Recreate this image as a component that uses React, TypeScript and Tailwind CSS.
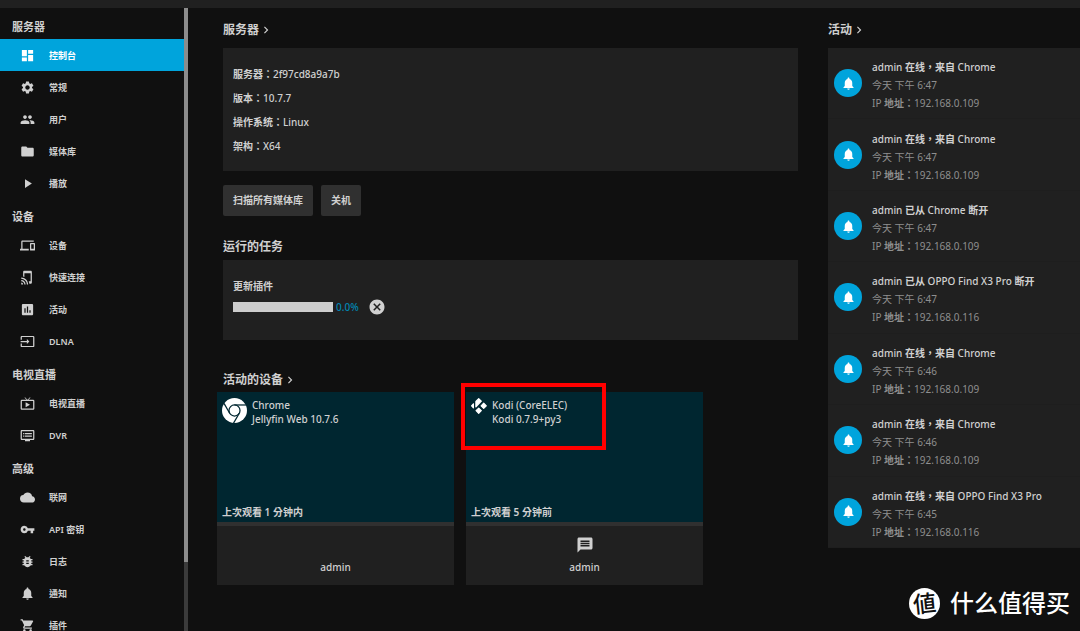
import type { IconType } from "react-icons";
import {
  MdAssessment,
  MdBugReport,
  MdCancel,
  MdChevronRight,
  MdCloud,
  MdDashboard,
  MdDevices,
  MdDvr,
  MdFolder,
  MdInput,
  MdLiveTv,
  MdMessage,
  MdNotifications,
  MdPeople,
  MdPlayArrow,
  MdSettings,
  MdShoppingCart,
  MdTapAndPlay,
  MdVpnKey,
} from "react-icons/md";

type NavItem = { label: string; icon: IconType; active?: boolean };
type NavGroup = { title: string; items: NavItem[] };

const navGroups: NavGroup[] = [
  {
    title: "服务器",
    items: [
      { label: "控制台", icon: MdDashboard, active: true },
      { label: "常规", icon: MdSettings },
      { label: "用户", icon: MdPeople },
      { label: "媒体库", icon: MdFolder },
      { label: "播放", icon: MdPlayArrow },
    ],
  },
  {
    title: "设备",
    items: [
      { label: "设备", icon: MdDevices },
      { label: "快速连接", icon: MdTapAndPlay },
      { label: "活动", icon: MdAssessment },
      { label: "DLNA", icon: MdInput },
    ],
  },
  {
    title: "电视直播",
    items: [
      { label: "电视直播", icon: MdLiveTv },
      { label: "DVR", icon: MdDvr },
    ],
  },
  {
    title: "高级",
    items: [
      { label: "联网", icon: MdCloud },
      { label: "API 密钥", icon: MdVpnKey },
      { label: "日志", icon: MdBugReport },
      { label: "通知", icon: MdNotifications },
      { label: "插件", icon: MdShoppingCart },
    ],
  },
];

const serverInfo = [
  { label: "服务器：", value: "2f97cd8a9a7b" },
  { label: "版本：", value: "10.7.7" },
  { label: "操作系统：", value: "Linux" },
  { label: "架构：", value: "X64" },
];

type Activity = {
  online: boolean;
  client: string;
  time: string;
  ip: string;
};

const activities: Activity[] = [
  { online: true, client: "Chrome", time: "6:47", ip: "192.168.0.109" },
  { online: true, client: "Chrome", time: "6:47", ip: "192.168.0.109" },
  { online: false, client: "Chrome", time: "6:47", ip: "192.168.0.109" },
  { online: false, client: "OPPO Find X3 Pro", time: "6:47", ip: "192.168.0.116" },
  { online: true, client: "Chrome", time: "6:46", ip: "192.168.0.109" },
  { online: true, client: "Chrome", time: "6:46", ip: "192.168.0.109" },
  { online: true, client: "OPPO Find X3 Pro", time: "6:45", ip: "192.168.0.116" },
];

function ChromeLogo() {
  return (
    <svg viewBox="0 0 24 24" className="h-[25px] w-[25px] shrink-0" aria-hidden="true">
      <circle cx="12" cy="12" r="12" fill="#fff" />
      <g fill="none" stroke="#002630" strokeWidth="1.2">
        <circle cx="12" cy="12" r="5.3" />
        <path d="M12 6.7H23" />
        <path d="M12 6.7H23" transform="rotate(120 12 12)" />
        <path d="M12 6.7H23" transform="rotate(240 12 12)" />
      </g>
    </svg>
  );
}

function KodiLogo() {
  return (
    <svg viewBox="0 0 16 16" className="h-4 w-4 shrink-0" aria-hidden="true">
      <g fill="#fff" stroke="#fff" strokeWidth="1.2" strokeLinejoin="round">
        <path d="M7.7 0.7 10.3 3.2 4.9 8.8V3.5Z" />
        <path d="M2.4 5.8V9.8L0.6 7.8Z" />
        <path d="M12.7 5.2 15.3 7.8 12.7 10.4 10.1 7.8Z" />
        <path d="M7.7 10.1 10.3 12.7 7.7 15.3 5.1 12.7Z" />
      </g>
    </svg>
  );
}

function Sidebar() {
  return (
    <aside className="flex w-[188px] shrink-0 overflow-hidden">
      <nav className="min-w-0 flex-1">
        {navGroups.map((group, i) => (
          <section key={group.title}>
            <h3
              className={`flex items-center pl-3 text-[11px] font-semibold ${
                i === 0 ? "h-[31px] pt-2" : "h-[30px] pt-1.5"
              }`}
            >
              {group.title}
            </h3>
            {group.items.map(({ label, icon: Icon, active }) => (
              <a
                key={label}
                href="#"
                className={`flex h-8 items-center gap-3.5 pl-5 text-[9px] font-semibold ${
                  active ? "bg-[#00a4dc] text-white" : ""
                }`}
              >
                <Icon className="h-[15px] w-[15px] shrink-0" />
                <span className="pt-px">{label}</span>
              </a>
            ))}
          </section>
        ))}
      </nav>
      <div className="w-1 bg-[#3b3b3b]">
        <div className="h-[89%] bg-[#8c8c8c]" />
      </div>
    </aside>
  );
}

function SectionLink({ children }: { children: string }) {
  return (
    <a href="#" className="inline-flex items-center">
      {children}
      <MdChevronRight className="h-3.5 w-3.5" />
    </a>
  );
}

function DeviceCard({
  icon,
  name,
  client,
  lastSeen,
  canMessage,
  highlighted,
}: {
  icon: React.ReactNode;
  name: string;
  client: string;
  lastSeen: string;
  canMessage?: boolean;
  highlighted?: boolean;
}) {
  return (
    <article className="relative w-[237px] bg-[#202020] text-[10px] font-medium">
      <div className="flex h-[130px] flex-col justify-between bg-[#002630] px-[5px] pt-[6px] pb-0.5">
        <div className="flex items-start gap-[5px]">
          {icon}
          <div className="leading-[14px]">
            <div>{name}</div>
            <div>{client}</div>
          </div>
        </div>
        <div className="leading-4 font-semibold">{lastSeen}</div>
      </div>
      <div className="h-1 bg-[#303030]" />
      <div className="flex h-[59px] flex-col items-center pt-2.5">
        <div className="h-[23px]">
          {canMessage && (
            <button type="button" aria-label="发送消息" className="block">
              <MdMessage className="h-[18px] w-[18px]" />
            </button>
          )}
        </div>
        <div className="leading-4">admin</div>
      </div>
      {highlighted && (
        <div className="absolute -top-[9px] -left-[5px] h-[67px] w-[145px] border-4 border-[#ff0000]" />
      )}
    </article>
  );
}

function ActivityList() {
  return (
    <ul className="flex min-h-[500px] flex-col bg-[#202020] text-[10px]">
      {activities.map((item, i) => (
        <li
          key={i}
          className="flex flex-1 items-center gap-2.5 border-b border-[#1e1e1e] pl-1.5"
        >
          <span className="flex h-7 w-7 shrink-0 items-center justify-center rounded-full bg-[#00a4dc] text-white">
            <MdNotifications className="h-[15px] w-[15px]" />
          </span>
          <div className="min-w-0 pt-1 leading-[18px] whitespace-nowrap text-[#8f8f8f]">
            <div className="font-medium text-[#d0d0d0]">
              admin <b>{item.online ? "在线，来自" : "已从"}</b> {item.client}
              {!item.online && <b> 断开</b>}
            </div>
            <div>今天 下午 {item.time}</div>
            <div>
              IP <b>地址：</b>
              {item.ip}
            </div>
          </div>
        </li>
      ))}
    </ul>
  );
}

export default function App() {
  return (
    <div className="relative flex h-screen flex-col overflow-hidden bg-[#101010] font-['Noto_Sans','Noto_Sans_CJK_TC',sans-serif] text-[#d0d0d0]">
      <header className="h-2 shrink-0 bg-[#202020]" />
      <div className="flex min-h-0 flex-1">
        <Sidebar />
        <main className="flex min-w-0 flex-1 gap-[30px] pl-[35px]">
          <div className="min-w-0 flex-1">
            <h2 className="flex h-10 items-center pt-1 text-xs font-semibold">
              <SectionLink>服务器</SectionLink>
            </h2>
            <div className="bg-[#202020] px-2.5 pt-3.5 pb-[13px] text-[10px] leading-6 font-medium">
              {serverInfo.map((row) => (
                <p key={row.label}>
                  <b>{row.label}</b>
                  {row.value}
                </p>
              ))}
            </div>
            <div className="mt-3.5 flex gap-2 text-[10px] font-bold">
              <button type="button" className="h-[31px] rounded-xs bg-[#303030] px-2.5">
                扫描所有媒体库
              </button>
              <button type="button" className="h-[31px] rounded-xs bg-[#303030] px-2.5">
                关机
              </button>
            </div>

            <h2 className="mt-4 flex h-7 items-center pt-0.5 text-xs font-semibold">
              运行的任务
            </h2>
            <div className="bg-[#202020] px-2.5 pt-[18px] pb-6 text-[10px] font-medium">
              <div className="leading-4 font-semibold">更新插件</div>
              <div className="mt-1 flex h-[18px] items-center">
                <div
                  role="progressbar"
                  aria-valuenow={0}
                  aria-label="更新插件"
                  className="h-2.5 w-[100px] bg-[#cdcdcd]"
                />
                <span className="ml-[3px] w-8 text-[#0086b3]">0.0%</span>
                <button type="button" aria-label="停止">
                  <MdCancel className="h-[18px] w-[18px]" />
                </button>
              </div>
            </div>

            <h2 className="mt-[26px] flex h-[26px] items-center pt-px text-xs font-semibold">
              <SectionLink>活动的设备</SectionLink>
            </h2>
            <div className="-ml-1.5 flex gap-3">
              <DeviceCard
                icon={<ChromeLogo />}
                name="Chrome"
                client="Jellyfin Web 10.7.6"
                lastSeen="上次观看 1 分钟内"
              />
              <DeviceCard
                icon={<KodiLogo />}
                name="Kodi (CoreELEC)"
                client="Kodi 0.7.9+py3"
                lastSeen="上次观看 5 分钟前"
                canMessage
                highlighted
              />
            </div>
          </div>

          <div className="w-[252px] shrink-0">
            <h2 className="flex h-10 items-center pt-1 text-xs font-semibold">
              <SectionLink>活动</SectionLink>
            </h2>
            <ActivityList />
          </div>
        </main>
      </div>

      <div className="absolute right-2.5 bottom-3 flex items-center gap-2.5 text-white">
        <span className="flex h-[31px] w-[31px] items-center justify-center rounded-full bg-white text-[23px] leading-none font-medium text-[#101010]">
          <span className="-rotate-6">値</span>
        </span>
        <span className="text-2xl leading-8 font-medium">什么值得买</span>
      </div>
    </div>
  );
}
